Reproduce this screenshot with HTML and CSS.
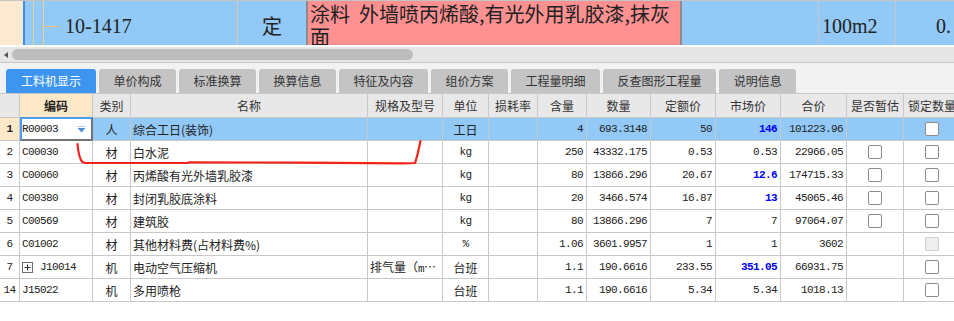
FILE: index.html
```html
<!DOCTYPE html>
<html lang="zh-CN">
<head>
<meta charset="utf-8"/>
<title>工料机显示</title>
<link rel="stylesheet" href="styles.css">
</head>
<body>
<div class="quota">
  <div class="quota-gutter"></div>
  <div class="quota-tree"><span class="branch"></span><span class="quota-code">10-1417</span></div>
  <div class="quota-type">定</div>
  <div class="quota-name">涂料&nbsp;&nbsp;外墙喷丙烯酸,有光外用乳胶漆,抹灰<br>面</div>
  <div class="quota-blank"></div>
  <div class="quota-unit">100m2</div>
  <div class="quota-qty">0.</div>
</div>

<div class="hscroll">
  <span class="hscroll-arrow"></span>
  <span class="hscroll-thumb"></span>
</div>

<div class="tabs">
  <div class="tab active">工料机显示</div>
  <div class="tab">单价构成</div>
  <div class="tab">标准换算</div>
  <div class="tab">换算信息</div>
  <div class="tab">特征及内容</div>
  <div class="tab">组价方案</div>
  <div class="tab">工程量明细</div>
  <div class="tab">反查图形工程量</div>
  <div class="tab">说明信息</div>
</div>

<div class="grid">
  <div class="grid-row grid-head">
    <div class="cell"></div>
    <div class="cell head-key">编码</div>
    <div class="cell">类别</div>
    <div class="cell">名称</div>
    <div class="cell">规格及型号</div>
    <div class="cell">单位</div>
    <div class="cell">损耗率</div>
    <div class="cell">含量</div>
    <div class="cell">数量</div>
    <div class="cell">定额价</div>
    <div class="cell">市场价</div>
    <div class="cell">合价</div>
    <div class="cell">是否暂估</div>
    <div class="cell">锁定数量</div>
  </div>

  <div class="grid-row row-sel">
    <div class="cell num-col">1</div>
    <div class="cell code edit">R00003
      <svg class="drop" width="9" height="7" viewBox="0 0 9 7"><rect x="0" y="0" width="9" height="1" fill="#b8cfe6"/><path d="M0.5 2 H8.5 L4.5 6.5 Z" fill="#4a8fd4"/></svg>
    </div>
    <div class="cell kind">人</div>
    <div class="cell">综合工日(装饰)</div>
    <div class="cell"></div>
    <div class="cell unit">工日</div>
    <div class="cell"></div>
    <div class="cell n">4</div>
    <div class="cell n">693.3148</div>
    <div class="cell n">50</div>
    <div class="cell n hi">146</div>
    <div class="cell n">101223.96</div>
    <div class="cell box"></div>
    <div class="cell box"><span class="check"></span></div>
  </div>

  <div class="grid-row">
    <div class="cell num-col">2</div>
    <div class="cell code">C00030</div>
    <div class="cell kind">材</div>
    <div class="cell">白水泥</div>
    <div class="cell"></div>
    <div class="cell unit mono">kg</div>
    <div class="cell"></div>
    <div class="cell n">250</div>
    <div class="cell n">43332.175</div>
    <div class="cell n">0.53</div>
    <div class="cell n">0.53</div>
    <div class="cell n">22966.05</div>
    <div class="cell box"><span class="check"></span></div>
    <div class="cell box"><span class="check"></span></div>
  </div>

  <div class="grid-row">
    <div class="cell num-col">3</div>
    <div class="cell code">C00060</div>
    <div class="cell kind">材</div>
    <div class="cell">丙烯酸有光外墙乳胶漆</div>
    <div class="cell"></div>
    <div class="cell unit mono">kg</div>
    <div class="cell"></div>
    <div class="cell n">80</div>
    <div class="cell n">13866.296</div>
    <div class="cell n">20.67</div>
    <div class="cell n hi">12.6</div>
    <div class="cell n">174715.33</div>
    <div class="cell box"><span class="check"></span></div>
    <div class="cell box"><span class="check"></span></div>
  </div>

  <div class="grid-row">
    <div class="cell num-col">4</div>
    <div class="cell code">C00380</div>
    <div class="cell kind">材</div>
    <div class="cell">封闭乳胶底涂料</div>
    <div class="cell"></div>
    <div class="cell unit mono">kg</div>
    <div class="cell"></div>
    <div class="cell n">20</div>
    <div class="cell n">3466.574</div>
    <div class="cell n">16.87</div>
    <div class="cell n hi">13</div>
    <div class="cell n">45065.46</div>
    <div class="cell box"><span class="check"></span></div>
    <div class="cell box"><span class="check"></span></div>
  </div>

  <div class="grid-row">
    <div class="cell num-col">5</div>
    <div class="cell code">C00569</div>
    <div class="cell kind">材</div>
    <div class="cell">建筑胶</div>
    <div class="cell"></div>
    <div class="cell unit mono">kg</div>
    <div class="cell"></div>
    <div class="cell n">80</div>
    <div class="cell n">13866.296</div>
    <div class="cell n">7</div>
    <div class="cell n">7</div>
    <div class="cell n">97064.07</div>
    <div class="cell box"><span class="check"></span></div>
    <div class="cell box"><span class="check"></span></div>
  </div>

  <div class="grid-row">
    <div class="cell num-col">6</div>
    <div class="cell code">C01002</div>
    <div class="cell kind">材</div>
    <div class="cell">其他材料费(占材料费%)</div>
    <div class="cell"></div>
    <div class="cell unit mono">%</div>
    <div class="cell"></div>
    <div class="cell n">1.06</div>
    <div class="cell n">3601.9957</div>
    <div class="cell n">1</div>
    <div class="cell n">1</div>
    <div class="cell n">3602</div>
    <div class="cell box"></div>
    <div class="cell box"><span class="check disabled"></span></div>
  </div>

  <div class="grid-row">
    <div class="cell num-col">7</div>
    <div class="cell code">
      <svg class="expand" width="11" height="11" viewBox="0 0 11 11"><rect x="0.5" y="0.5" width="10" height="10" fill="#fff" stroke="#6e6e6e"/><path d="M2.5 5.5 H8.5 M5.5 2.5 V8.5" stroke="#333" stroke-width="1"/></svg>
      J10014
    </div>
    <div class="cell kind">机</div>
    <div class="cell">电动空气压缩机</div>
    <div class="cell spec">排气量（<span class="latin">m³/min</span>）0.6</div>
    <div class="cell unit">台班</div>
    <div class="cell"></div>
    <div class="cell n">1.1</div>
    <div class="cell n">190.6616</div>
    <div class="cell n">233.55</div>
    <div class="cell n hi">351.05</div>
    <div class="cell n">66931.75</div>
    <div class="cell box"></div>
    <div class="cell box"><span class="check"></span></div>
  </div>

  <div class="grid-row">
    <div class="cell num-col">14</div>
    <div class="cell code">J15022</div>
    <div class="cell kind">机</div>
    <div class="cell">多用喷枪</div>
    <div class="cell"></div>
    <div class="cell unit">台班</div>
    <div class="cell"></div>
    <div class="cell n">1.1</div>
    <div class="cell n">190.6616</div>
    <div class="cell n">5.34</div>
    <div class="cell n">5.34</div>
    <div class="cell n">1018.13</div>
    <div class="cell box"></div>
    <div class="cell box"><span class="check"></span></div>
  </div>
</div>

<!-- 红色手画标注 -->
<svg class="mark" width="954" height="321" viewBox="0 0 954 321">
  <path d="M77.5 144 C78 150 79 156 81 160 C82 162.5 84 163 90 163 L188 163 L188.5 162.3 L300 162.6 L404 163.3 L415 163 C417 158 418.5 150 420.5 141" fill="none" stroke="#f2231a" stroke-width="2.2" stroke-linecap="round" stroke-linejoin="round"/>
</svg>
</body>
</html>
```

FILE: styles.css
```css
body {
  margin: 0;
  width: 954px;
  height: 321px;
  overflow: hidden;
  position: relative;
  background: #fff;
  font-family: "Noto Sans CJK SC", sans-serif;
  font-size: 12px;
  color: #222;
}

/* 上方定额行 */
.quota {
  display: flex;
  height: 45px;
  box-sizing: border-box;
  border-top: 1px solid #c4c4c4;
  background: #93c9f6;
  font-family: "Liberation Serif", "Noto Sans CJK SC", serif;
  font-size: 20px;
  color: #222;
  overflow: hidden;
}
.quota-gutter {
  width: 25px;
  box-sizing: border-box;
  flex: none;
  background: #fde9cf;
  border-right: 2px solid #3d8fe6;
}
.quota-tree {
  width: 213px;
  flex: none;
  box-sizing: border-box;
  display: flex;
  align-items: flex-start;
  padding-left: 18px;
  border-right: 1px solid #d9cbb6;
  background:
    linear-gradient(#f6cd94, #f6cd94) 8px 0 / 1px 100% no-repeat,
    linear-gradient(#f6cd94, #f6cd94) 18px 0 / 1px 100% no-repeat;
}
.branch {
  width: 17px;
  height: 1px;
  flex: none;
  margin-top: 25px;
  background: #f5bf78;
}
.quota-code {
  margin-left: 5px;
  padding-top: 15px;
  line-height: 20px;
}
.quota-type {
  width: 68px;
  flex: none;
  text-align: center;
  padding-top: 15px;
  line-height: 20px;
  font-family: "Noto Sans CJK SC", sans-serif;
}
.quota-name {
  width: 376px;
  flex: none;
  box-sizing: border-box;
  padding: 1px 0 0 2px;
  border-left: 2px solid #8c8c8c;
  border-right: 2px solid #8c8c8c;
  background: #ff9191;
  font-family: "Noto Sans CJK SC", sans-serif;
  line-height: 23px;
  white-space: nowrap;
}
.quota-blank {
  width: 137px;
  flex: none;
  box-sizing: border-box;
  border-right: 1px solid #c6c6c6;
}
.quota-unit {
  width: 77px;
  flex: none;
  box-sizing: border-box;
  padding: 15px 0 0 3px;
  line-height: 20px;
  border-right: 1px solid #c6c6c6;
}
.quota-qty {
  flex: 1;
  padding: 15px 0 0 40px;
  line-height: 20px;
}

/* 横向滚动条 */
.hscroll {
  display: flex;
  align-items: center;
  height: 15px;
  margin-top: 2px;
  background: #e6e6e6;
  border-bottom: 1px solid #c8c8c8;
}
.hscroll-arrow {
  width: 0;
  height: 0;
  margin-left: 4px;
  border-top: 3.5px solid transparent;
  border-bottom: 3.5px solid transparent;
  border-right: 4px solid #555;
}
.hscroll-thumb {
  width: 401px;
  height: 11px;
  margin-left: 4px;
  border-radius: 6px;
  background: #bdbdbd;
}

/* 页签 */
.tabs {
  display: flex;
  gap: 3px;
  height: 31px;
  box-sizing: border-box;
  padding: 6px 0 0 6px;
  background: #f2f2f2;
  border-bottom: 1px solid #c8c8c8;
}
.tab {
  height: 24px;
  line-height: 24px;
  padding: 0 14.5px;
  background: #c4c4c4;
  border-radius: 3px 3px 0 0;
  color: #333;
}
.tab.active {
  padding: 0 15px;
  background: #3e95ef;
  color: #fff;
}

/* 工料机表格 */
.grid {
  width: 961px;
}
.grid-row {
  display: grid;
  grid-template-columns: 20px 73px 38px 237px 75px 46px 49px 49px 64px 65px 65px 66px 57px 57px;
  height: 23px;
}
.grid-head {
  height: 24px;
  background: #e8e8e8;
  color: #333;
}
.cell {
  box-sizing: border-box;
  min-width: 0;
  display: flex;
  align-items: center;
  padding: 0 2px;
  border-right: 1px solid #c8c8c8;
  border-bottom: 1px solid #c8c8c8;
  overflow: hidden;
  white-space: nowrap;
}
.grid-head .cell {
  justify-content: center;
  padding: 0;
}
.grid-head .head-key {
  background: #fde8c8;
  font-weight: bold;
  color: #222;
}
.num-col {
  justify-content: center;
  padding: 0;
  font-family: "Liberation Mono", monospace;
  font-size: 11px;
  letter-spacing: -0.6px;
}
.code, .mono, .n, .latin {
  font-family: "Liberation Mono", monospace;
  font-size: 11px;
  letter-spacing: -0.6px;
}
.code {
  position: relative;
}
.kind, .unit, .box {
  justify-content: center;
}
.n {
  justify-content: flex-end;
  padding: 0 3px;
}
.hi {
  color: #0000f0;
  font-weight: bold;
}
.spec {
  display: block;
  line-height: 22px;
  text-overflow: ellipsis;
}
.expand {
  margin: 0 7px 0 0;
  flex: none;
}
.check {
  width: 14px;
  height: 14px;
  box-sizing: border-box;
  border: 1px solid #8c8c8c;
  border-radius: 2px;
  background: #fff;
}
.check.disabled {
  border-color: #d0d0d0;
  background: #eeeeee;
}

/* 当前选中行 */
.row-sel .cell {
  background: #93c9f6;
}
.row-sel .num-col {
  background: #fde8c8;
  font-weight: bold;
}
.row-sel .edit {
  background: #fff;
  padding: 0;
  border-top: 2px solid #4a9cf0;
  border-left: 2px solid #4a9cf0;
  border-right: 2px solid #737373;
  border-bottom: 2px solid #737373;
  margin-top: -1px;
  height: 24px;
}
.drop {
  position: absolute;
  left: 55px;
  top: 7px;
}

.mark {
  position: absolute;
  top: 0;
  left: 0;
  pointer-events: none;
}
```
